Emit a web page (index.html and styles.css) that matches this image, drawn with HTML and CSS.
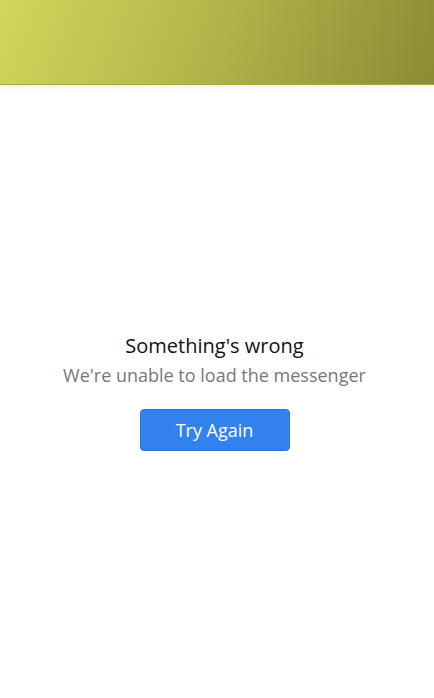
FILE: index.html
```html
<!DOCTYPE html>
<html>
<head>
    <title>Messenger</title>
    <link rel="stylesheet" href="styles.css">
</head>
<body>
    <div class="app">
        <div class="header"></div>
        <div class="error-state">
            <h3>Something's wrong</h3>
            <p>We're unable to load the messenger</p>
            <button class="retry">Try Again</button>
        </div>
    </div>
</body>
</html>
```

FILE: styles.css
```css
html, body {
    margin: 0;
    height: 100%;
}

body {
    font-family: 'Open Sans', 'Lato', sans-serif;
    background: #fff;
}

.app {
    display: flex;
    flex-direction: column;
    height: 100%;
}

.header {
    height: 84px;
    flex-shrink: 0;
    background: linear-gradient(110deg, #d2d65a 0%, #b4b84b 45%, #8b8c34 100%);
    border-bottom: 1px solid #a3a52e;
    box-shadow: 0 2px 6px rgba(0, 0, 0, 0.07);
}

.error-state {
    flex: 1;
    display: flex;
    flex-direction: column;
    align-items: center;
    justify-content: center;
    padding-right: 5px;
}

h3 {
    margin: 0;
    font-size: 20px;
    font-weight: 400;
    color: #111;
    line-height: 26px;
}

p {
    margin: 4px 0 0 0;
    font-size: 18px;
    color: #777;
    line-height: 24px;
}

.retry {
    margin-top: 22px;
    width: 150px;
    height: 42px;
    background: #3381ef;
    border: 1px solid #2b74dc;
    border-radius: 4px;
    color: #fff;
    font-family: inherit;
    font-size: 18px;
    cursor: pointer;
}
```
